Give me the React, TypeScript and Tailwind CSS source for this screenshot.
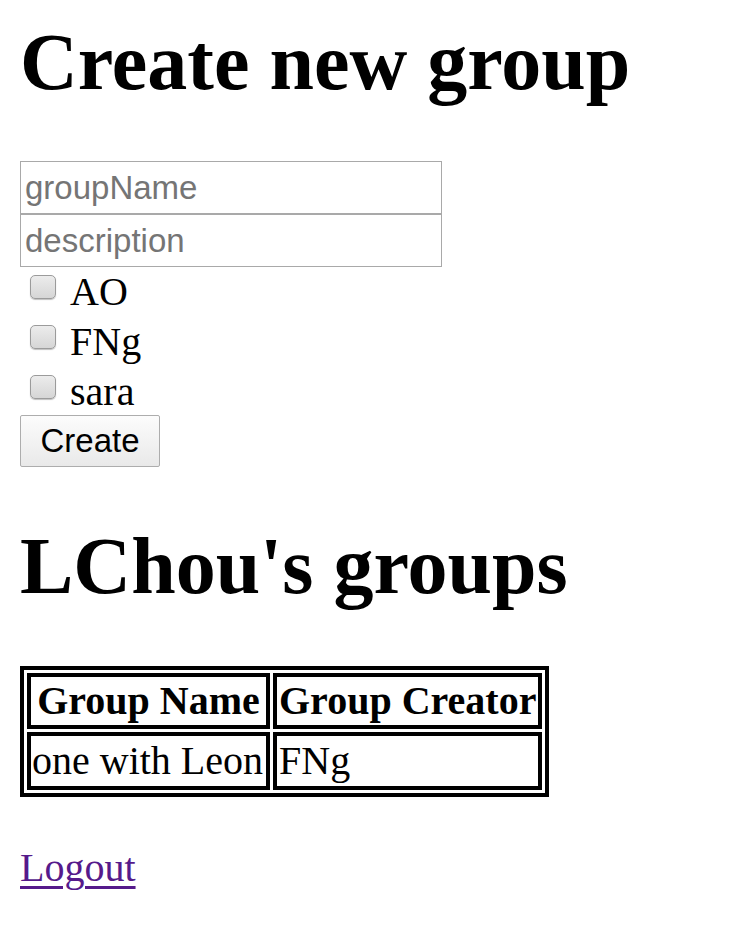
import React, { useState } from 'react';

const members = ['AO', 'FNg', 'sara'];

const groups = [{ name: 'one with Leon', creator: 'FNg' }];

export default function App() {
  const [groupName, setGroupName] = useState('');
  const [description, setDescription] = useState('');
  const [picked, setPicked] = useState<string[]>([]);

  const toggle = (m: string) => {
    setPicked(picked.includes(m) ? picked.filter((p) => p !== m) : [...picked, m]);
  };

  return (
    <div className="min-h-screen bg-white pl-[20px] font-['Liberation_Serif','Times_New_Roman',serif] text-black">
      <h1 className="mt-[16px] text-[80px] font-bold leading-[92px]">Create new group</h1>

      <form className="mt-[53px]" onSubmit={(e) => e.preventDefault()}>
        <input
          type="text"
          value={groupName}
          onChange={(e) => setGroupName(e.target.value)}
          placeholder="groupName"
          className="block h-[53px] w-[422px] border border-[#a9a9a9] px-[4px] font-['Liberation_Sans',Arial,sans-serif] text-[33px] outline-none placeholder:text-[#757575]"
        />
        <input
          type="text"
          value={description}
          onChange={(e) => setDescription(e.target.value)}
          placeholder="description"
          className="block h-[53px] w-[422px] border border-[#a9a9a9] px-[4px] font-['Liberation_Sans',Arial,sans-serif] text-[33px] outline-none placeholder:text-[#757575]"
        />

        {members.map((m) => (
          <label key={m} className="flex h-[50px] items-start">
            <input
              type="checkbox"
              checked={picked.includes(m)}
              onChange={() => toggle(m)}
              className="ml-[10px] mt-[8px] h-[24px] w-[26px] appearance-none rounded-[5px] border border-[#9b9b9b] bg-gradient-to-b from-[#ececec] to-[#d6d6d6] shadow-[0_1px_1px_rgba(0,0,0,0.25)] checked:from-[#9ec3f0] checked:to-[#5f95d6]"
            />
            <span className="ml-[14px] text-[40px] leading-[50px]">{m}</span>
          </label>
        ))}

        <button
          type="submit"
          className="-mt-[2px] block h-[52px] w-[140px] rounded-[2px] border border-[#adadad] bg-gradient-to-b from-[#fcfcfc] to-[#e9e9e9] font-['Liberation_Sans',Arial,sans-serif] text-[33px] text-black"
        >
          Create
        </button>
      </form>

      <h2 className="mt-[53px] text-[80px] font-bold leading-[92px]">LChou's groups</h2>

      <table className="mt-[54px] border-separate border-spacing-[3px] border-[4px] border-solid border-black whitespace-nowrap text-[40px] leading-[46px]">
        <thead>
          <tr>
            <th className="h-[56px] w-[243px] border-[4px] border-solid border-black px-[1px] text-center font-bold">
              Group Name
            </th>
            <th className="h-[56px] w-[268px] border-[4px] border-solid border-black px-[2px] text-center font-bold">
              Group Creator
            </th>
          </tr>
        </thead>
        <tbody>
          {groups.map((g) => (
            <tr key={g.name}>
              <td className="h-[58px] border-[4px] border-solid border-black px-[1px] text-left">{g.name}</td>
              <td className="h-[58px] border-[4px] border-solid border-black px-[2px] text-left">{g.creator}</td>
            </tr>
          ))}
        </tbody>
      </table>

      <p className="mt-[48px] text-[40px] leading-[46px]">
        <a href="#" className="text-[#551a8b] underline decoration-[3px] underline-offset-[5px]">
          Logout
        </a>
      </p>
    </div>
  );
}
